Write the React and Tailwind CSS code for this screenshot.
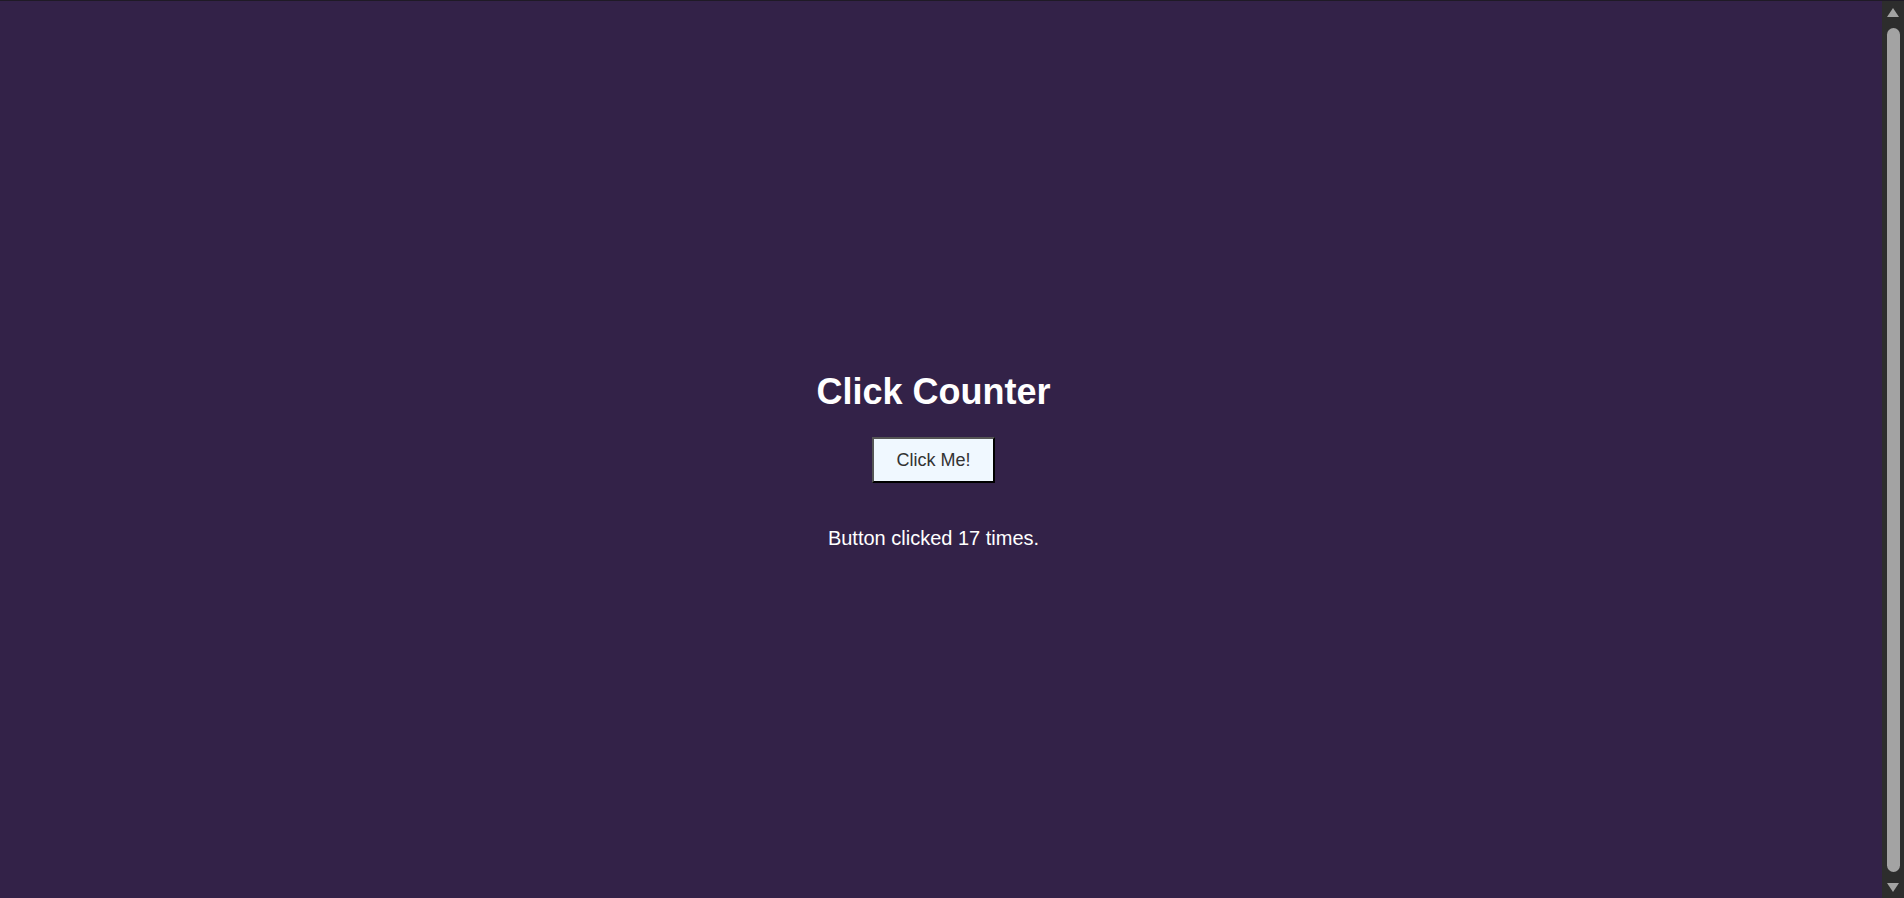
import { useState } from 'react';

function ScrollArrow({ down }) {
  return (
    <svg width="14" height="11" viewBox="0 0 14 11" className="block">
      <polygon points={down ? '1,1 13,1 7,10' : '7,1 13,10 1,10'} fill="#a3a3a3" />
    </svg>
  );
}

function App() {
  const [count, setCount] = useState(17);

  return (
    <div className="h-screen flex bg-[#332248] border-t border-[#1f1a26] font-['Liberation_Sans',Arial,sans-serif]">
      <main className="flex-1 flex flex-col items-center pt-[371px] pr-[15px]">
        <h1 className="text-[36px] leading-[40px] font-bold text-white">Click Counter</h1>

        <button
          onClick={() => setCount(count + 1)}
          className="mt-[25px] px-[22px] py-[10px] text-[18px] leading-[22px] text-[#333] bg-[#f0f8ff] border-2 border-t-[#555] border-l-[#555] border-b-black border-r-black cursor-pointer"
        >
          Click Me!
        </button>

        <p className="mt-[41px] text-[20px] leading-[28px] text-white">
          Button clicked {count} times.
        </p>
      </main>

      {/* scrollbar */}
      <div className="w-[22px] bg-[#2d2d2d] flex flex-col items-center pt-[6px] pb-[5px]">
        <ScrollArrow />
        <div className="flex-1 w-[13px] my-[10px] rounded-full bg-[#a3a3a3]" />
        <ScrollArrow down />
      </div>
    </div>
  );
}

export default App;
